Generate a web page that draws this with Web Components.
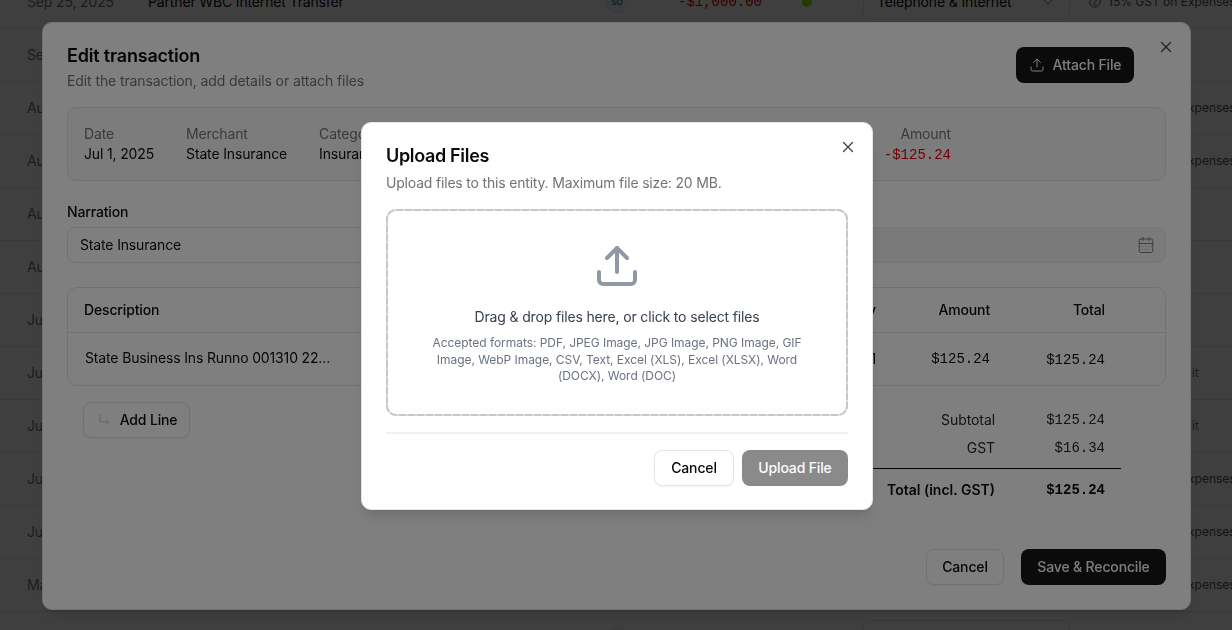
<!DOCTYPE html>
<html lang="en">
<head>
<meta charset="utf-8">
<title>Upload Files</title>
<style>
html,body{margin:0;padding:0;height:630px;overflow:hidden;background:#fff}
body{font:14px/20px Inter,"Liberation Sans",sans-serif;color:#0a0a0a;letter-spacing:-.15px}
</style>
</head>
<body>
<tx-list>
  <tx-row date="Sep 25, 2025" desc="Partner WBC Internet Transfer" amount="-$1,000.00" category="Telephone &amp; Internet" tax="15% GST on Expenses" full></tx-row>
  <tx-row date="Se"></tx-row>
  <tx-row date="Au" tax="15% GST on Expenses"></tx-row>
  <tx-row date="Au" tax="15% GST on Expenses"></tx-row>
  <tx-row date="Au"></tx-row>
  <tx-row date="Au"></tx-row>
  <tx-row date="Ju"></tx-row>
  <tx-row date="Ju" tail="it"></tx-row>
  <tx-row date="Ju" tail="it"></tx-row>
  <tx-row date="Ju" tax="15% GST on Expenses"></tx-row>
  <tx-row date="Ju" tax="15% GST on Expenses"></tx-row>
  <tx-row date="Ma" tax="15% GST on Expenses"></tx-row>
  <tx-row stub></tx-row>
</tx-list>
<edit-dialog></edit-dialog>
<upload-dialog></upload-dialog>
<script>
const ICONS = {
  x: '<path d="M18 6 6 18"/><path d="m6 6 12 12"/>',
  upload: '<path d="M21 15v4a2 2 0 0 1-2 2H5a2 2 0 0 1-2-2v-4"/><path d="m17 8-5-5-5 5"/><path d="M12 3v12"/>',
  corner: '<path d="M6 4v11h13"/><path d="m15.5 11.5 3.5 3.5-3.5 3.5"/>',
  calendar: '<path d="M8 2v4"/><path d="M16 2v4"/><rect width="18" height="18" x="3" y="4" rx="2"/><path d="M3 10h18"/><path d="M7 14h.01M11 14h.01M15 14h.01M19 14h.01M7 18h.01M11 18h.01M15 18h.01"/>',
  chevron: '<path d="m6 9 6 6 6-6"/>',
  receipt: '<circle cx="12" cy="12" r="9"/><path d="M8 8c3-2 6-1 6 2s-4 2-4 5 3 3 5 1"/>'
};
class XIcon extends HTMLElement {
  connectedCallback() {
    if (this.shadowRoot) return;
    const s = this.getAttribute('size') || 16, w = this.getAttribute('stroke') || 2;
    this.attachShadow({mode:'open'}).innerHTML = `<style>:host{display:inline-flex;flex:none;color:inherit}svg{display:block}</style>
    <svg width="${s}" height="${s}" viewBox="0 0 24 24" fill="none" stroke="currentColor" stroke-width="${w}" stroke-linecap="round" stroke-linejoin="round">${ICONS[this.getAttribute('name')]||''}</svg>`;
  }
}
customElements.define('x-icon', XIcon);

class XButton extends HTMLElement {
  constructor() {
    super();
    this.attachShadow({mode:'open'}).innerHTML = `<style>
    :host{display:inline-flex;align-items:center;justify-content:center;box-sizing:border-box;height:36px;border-radius:8px;font:500 14px/20px Inter,"Liberation Sans",sans-serif;white-space:nowrap;gap:8px;flex:none}
    :host([variant=outline]){background:#fff;border:1px solid #e5e5e5;color:#0a0a0a;box-shadow:0 1px 2px rgba(0,0,0,.05)}
    :host([variant=primary]){background:#171717;color:#fafafa}
    :host([disabled]){opacity:.5}
    </style><slot name="icon"></slot><slot></slot>`;
  }
}
customElements.define('x-button', XButton);

class TxList extends HTMLElement {
  constructor() {
    super();
    this.attachShadow({mode:'open'}).innerHTML = `<style>:host{display:block;margin-top:-24px}</style><slot></slot>`;
  }
}
customElements.define('tx-list', TxList);

class TxRow extends HTMLElement {
  connectedCallback() {
    if (this.shadowRoot) return;
    const a = n => this.getAttribute(n) || '';
    const full = this.hasAttribute('full'), stub = this.hasAttribute('stub');
    let mid = '';
    if (full || stub) {
      mid = `<span class="desc">${a('desc')}</span>
      <span class="badge">${full ? 'SO' : ''}</span>
      <span class="amt">${a('amount')}</span>
      <span class="dotcell">${full ? '<i class="dot"></i>' : ''}</span>
      <span class="select">${a('category').replace('&','&amp;')}${full ? '<x-icon name="chevron" size="16" stroke="1.5" style="color:#8a8a8a"></x-icon>' : ''}</span>`;
    }
    this.attachShadow({mode:'open'}).innerHTML = `<style>
    :host{display:grid;grid-template-columns:121px 458px 22px 134px 90px 207px auto;align-items:center;height:53px;box-sizing:border-box;border-bottom:1px solid #e5e5e5;padding-left:27px;white-space:nowrap;overflow:hidden}
    .date{grid-column:1;color:#737373}
    .desc{grid-column:2}
    .badge{grid-column:3;box-sizing:border-box;width:22px;height:22px;border-radius:50%;border:1px solid #dbe4ea;background:#f3f7fa;color:#1e5a78;font:500 8px/20px Inter,sans-serif;text-align:center}
    .amt{grid-column:4;text-align:right;font:14px/20px "Liberation Mono",monospace;color:#e7000b;letter-spacing:0}
    .dotcell{grid-column:5;display:flex;justify-content:center}
    .dot{display:block;width:10px;height:10px;border-radius:50%;background:#9fe000}
    .select{grid-column:6;margin-left:11px;box-sizing:border-box;width:207px;height:36px;border:1px solid #e5e5e5;border-radius:8px;display:flex;align-items:center;justify-content:space-between;padding:0 13px}
    .tax{grid-column:7;display:flex;align-items:center;gap:6px;margin-left:29px;font-size:12px;letter-spacing:0;color:#525252}
    .tail{grid-column:7;margin-left:133px;font-size:12px;letter-spacing:0;color:#737373}
    .tax.plain{margin-left:49px}
    </style>
    <span class="date">${a('date')}</span>${mid}
    ${full ? `<span class="tax"><x-icon name="receipt" size="14" stroke="1.5"></x-icon>${a('tax')}</span>` : a('tax') ? `<span class="tax plain">${a('tax')}</span>` : ''}
    ${a('tail') ? `<span class="tail">${a('tail')}</span>` : ''}`;
  }
}
customElements.define('tx-row', TxRow);

class XBackdrop extends HTMLElement {
  constructor() {
    super();
    this.attachShadow({mode:'open'}).innerHTML = `<style>:host{display:block;position:fixed;inset:0;background:rgba(0,0,0,.5)}</style><slot></slot>`;
  }
}
customElements.define('x-backdrop', XBackdrop);

class InfoField extends HTMLElement {
  connectedCallback() {
    if (this.shadowRoot) return;
    this.attachShadow({mode:'open'}).innerHTML = `<style>
    :host{display:block;white-space:nowrap}
    .l{color:#737373}
    .v{color:#0a0a0a}
    :host([money]){text-align:right}
    :host([money]) .v{font-family:"Liberation Mono",monospace;color:#e7000b;letter-spacing:0;padding-top:1px}
    </style><div class="l">${this.getAttribute('label')}</div><div class="v">${this.getAttribute('value')}</div>`;
  }
}
customElements.define('info-field', InfoField);

class LineTable extends HTMLElement {
  constructor() {
    super();
    this.attachShadow({mode:'open'}).innerHTML = `<style>
    :host{display:block;border:1px solid #e5e5e5;border-radius:10px;overflow:hidden}
    .r{display:grid;grid-template-columns:1fr 100px 114px 115px;align-items:center;padding:0 60px 0 16px;white-space:nowrap}
    .h{height:44px;border-bottom:1px solid #e5e5e5;font-weight:500}
    .b{height:52px}
    .num{text-align:right}
    .mono{font-family:"Liberation Mono",monospace;letter-spacing:0}
    .d{padding-left:1px;margin-bottom:2px}
    .t{padding-top:2px}
    </style>
    <div class="r h"><span>Description</span><span class="num">Qty</span><span class="num">Amount</span><span class="num">Total</span></div>
    <div class="r b"><span class="d">State Business Ins Runno 001310 22...</span><span class="num">1</span><span class="num mono">$125.24</span><span class="num mono t">$125.24</span></div>`;
  }
}
customElements.define('line-table', LineTable);

class TotalsPanel extends HTMLElement {
  constructor() {
    super();
    this.attachShadow({mode:'open'}).innerHTML = `<style>
    :host{display:block;width:300px;margin-top:4px}
    .r{display:grid;grid-template-columns:174px 110px;height:28px;align-items:center;padding-right:16px;color:#262626}
    .r span:last-child{text-align:right;font-family:"Liberation Mono",monospace;letter-spacing:0}
    .r span:first-child{text-align:right;letter-spacing:-.08px}
    .tot{border-top:1px solid #0a0a0a;margin-top:6px;padding-top:8px;height:26px;box-sizing:content-box;font-weight:600;color:#0a0a0a}
    .tot span:first-child{letter-spacing:0}
    .tot span:last-child{font-weight:700}
    </style>
    <div class="r"><span>Subtotal</span><span>$125.24</span></div>
    <div class="r"><span>GST</span><span>$16.34</span></div>
    <div class="r tot"><span>Total (incl. GST)</span><span>$125.24</span></div>`;
  }
}
customElements.define('totals-panel', TotalsPanel);

class EditDialog extends HTMLElement {
  constructor() {
    super();
    this.attachShadow({mode:'open'}).innerHTML = `<style>
    :host{display:block}
    .panel{position:fixed;left:42px;top:22px;width:1149px;height:588px;box-sizing:border-box;background:#fff;border:1px solid #e5e5e5;border-radius:10px;padding:19px 24px 24px;display:flex;flex-direction:column;box-shadow:0 10px 15px -3px rgba(0,0,0,.1),0 4px 6px -4px rgba(0,0,0,.1)}
    .close{position:absolute;top:15px;right:15px;color:#404040;display:flex}
    header{display:flex;justify-content:space-between;margin-bottom:16px}
    h2{margin:0;font:600 18px/28px Inter,"Liberation Sans",sans-serif;letter-spacing:-.19px}
    p{margin:1px 0 0;color:#737373;letter-spacing:-.1px}
    .hbtn{margin:5px 32px 0 0;width:118px}
    .info{display:flex;gap:32px;background:rgba(245,245,245,.6);border:1px solid #e5e5e5;border-radius:10px;padding:16px 214px 15px 16px;margin-bottom:21px}
    .info info-field:last-child{margin-left:auto}
    .fields{display:grid;grid-template-columns:1fr 1fr;gap:16px;margin-bottom:24px}
    label{display:block;font-weight:500;margin-bottom:5px}
    .input{box-sizing:border-box;height:36px;border:1px solid #e5e5e5;border-radius:8px;padding:0 10px 0 12px;display:flex;align-items:center;justify-content:space-between}
    .input.dis{background:#f5f5f5;border-color:#efefef;color:#525252}
    .lower{display:flex;justify-content:space-between;align-items:flex-start;padding:16px 45px 0 16px}
    .add{width:107px}
    footer{margin-top:auto;display:flex;justify-content:flex-end;gap:17px}
    .cancel{width:78px}
    .save{width:145px}
    </style>
    <div class="panel">
      <span class="close"><x-icon name="x" size="18" stroke="1.6"></x-icon></span>
      <header>
        <div><h2>Edit transaction</h2><p>Edit the transaction, add details or attach files</p></div>
        <x-button class="hbtn" variant="primary"><x-icon slot="icon" name="upload" size="16" stroke="1.5"></x-icon>Attach File</x-button>
      </header>
      <section class="info">
        <info-field label="Date" value="Jul 1, 2025"></info-field>
        <info-field label="Merchant" value="State Insurance"></info-field>
        <info-field label="Category" value="Insurance"></info-field>
        <info-field money label="Amount" value="-$125.24"></info-field>
      </section>
      <section class="fields">
        <div><label>Narration</label><div class="input">State Insurance</div></div>
        <div><label>&nbsp;</label><div class="input dis"><span></span><x-icon name="calendar" size="18" stroke="1.2" style="color:#737373"></x-icon></div></div>
      </section>
      <line-table></line-table>
      <div class="lower">
        <x-button class="add" variant="outline"><x-icon slot="icon" name="corner" size="16" stroke="1.5" style="color:#c8c8c8"></x-icon>Add Line</x-button>
        <totals-panel></totals-panel>
      </div>
      <footer>
        <x-button class="cancel" variant="outline">Cancel</x-button>
        <x-button class="save" variant="primary">Save &amp; Reconcile</x-button>
      </footer>
    </div>`;
  }
  connectedCallback() {
    if (this.bd) return;
    this.bd = document.createElement('x-backdrop');
    this.shadowRoot.prepend(this.bd);
  }
}
customElements.define('edit-dialog', EditDialog);

class DropZone extends HTMLElement {
  constructor() {
    super();
    this.attachShadow({mode:'open'}).innerHTML = `<style>
    :host{display:flex;flex-direction:column;align-items:center;position:relative;box-sizing:border-box;height:207px;padding:33px 34px 0;text-align:center}
    .edge{position:absolute;inset:0;width:100%;height:100%;fill:none;stroke-width:2}
    .t{margin-top:17px;color:#374151}
    .s{margin-top:8px;font-size:12px;line-height:16.5px;color:#6b7280;letter-spacing:-.05px}
    </style>
    <svg class="edge" aria-hidden="true"><rect x="1" y="1" width="460" height="205" rx="9" stroke="#dcdde0"/><rect x="1" y="1" width="460" height="205" rx="9" stroke="#c6c8cc" stroke-dasharray="7 2"/></svg>
    <x-icon name="upload" size="48" style="color:#9098a6"></x-icon>
    <div class="t">Drag &amp; drop files here, or click to select files</div>
    <div class="s">Accepted formats: PDF, JPEG Image, JPG Image, PNG Image, GIF Image, WebP Image, CSV, Text, Excel (XLS), Excel (XLSX), Word (DOCX), Word (DOC)</div>`;
  }
}
customElements.define('drop-zone', DropZone);

class UploadDialog extends HTMLElement {
  constructor() {
    super();
    this.attachShadow({mode:'open'}).innerHTML = `<style>
    :host{display:block}
    .panel{position:fixed;left:361px;top:122px;width:512px;height:388px;box-sizing:border-box;background:#fff;border:1px solid #e5e5e5;border-radius:10px;padding:19px 24px 24px;box-shadow:0 10px 15px -3px rgba(0,0,0,.1),0 4px 6px -4px rgba(0,0,0,.1)}
    .close{position:absolute;top:15px;right:15px;color:#404040;display:flex}
    h2{margin:0;font:600 18px/28px Inter,"Liberation Sans",sans-serif;letter-spacing:-.33px}
    p{margin:3px 0 16px;color:#737373;letter-spacing:-.185px}
    hr{border:0;height:2px;background:#f0f0f0;margin:16px 0 16px}
    footer{display:flex;justify-content:flex-end;gap:8px}
    .cancel{width:80px}
    .up{width:106px}
    </style>
    <div class="panel">
      <span class="close"><x-icon name="x" size="18" stroke="1.6"></x-icon></span>
      <h2>Upload Files</h2>
      <p>Upload files to this entity. Maximum file size: 20 MB.</p>
      <drop-zone></drop-zone>
      <hr>
      <footer>
        <x-button class="cancel" variant="outline">Cancel</x-button>
        <x-button class="up" variant="primary" disabled>Upload File</x-button>
      </footer>
    </div>`;
  }
  connectedCallback() {
    if (this.bd) return;
    this.bd = document.createElement('x-backdrop');
    this.shadowRoot.prepend(this.bd);
  }
}
customElements.define('upload-dialog', UploadDialog);
</script>
</body>
</html>
